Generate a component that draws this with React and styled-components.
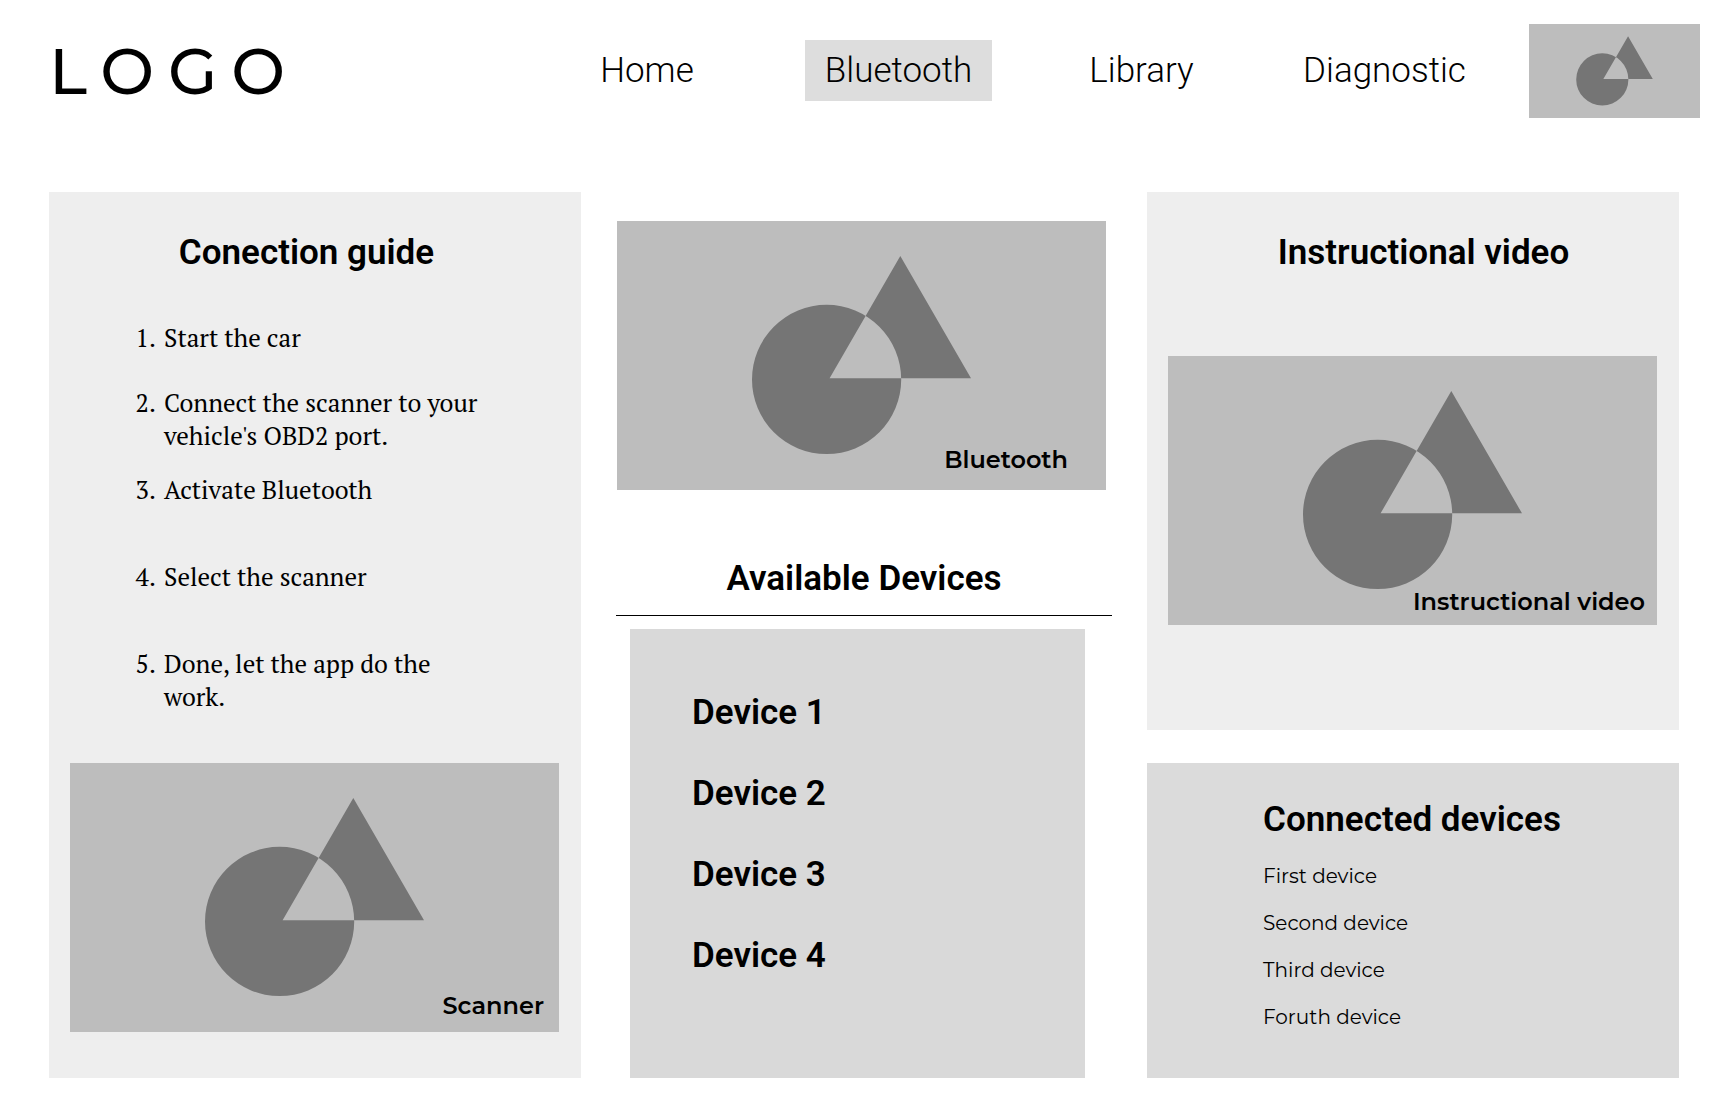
import React from "react";
import styled, { createGlobalStyle } from "styled-components";

const GlobalStyle = createGlobalStyle`
  *, *::before, *::after { box-sizing: border-box; }
  body { margin: 0; background: #ffffff; color: #000000; font-family: Roboto, "Liberation Sans", sans-serif; }
  h2, p, ul, ol, figure { margin: 0; padding: 0; }
`;

const geometric = `Montserrat, Inter, "Open Sans", sans-serif`;

const Header = styled.header`
  display: flex;
  align-items: flex-start;
  padding: 24px 28px 0 49px;
`;

const Logo = styled.a`
  margin: 8px auto 0 0;
  color: inherit;
  text-decoration: none;
  font-family: Montserrat, Lato, sans-serif;
  font-size: 64px;
  font-weight: 500;
  line-height: 78px;
  letter-spacing: 14px;
`;

const Nav = styled.nav`
  display: grid;
  grid-template-columns: 204px repeat(3, 187px);
  gap: 56px;
  margin: 16px 51px 0 0;
`;

const NavLink = styled.a`
  padding: 10px 0 9px;
  background: ${({ $active }) => ($active ? "#dddddd" : "transparent")};
  color: inherit;
  text-align: center;
  text-decoration: none;
  font-size: 35px;
  font-weight: 300;
  line-height: 42px;
`;

const Thumbnail = styled.div`
  width: 171px;
`;

const Main = styled.main`
  display: grid;
  grid-template-columns: 532fr 496fr 532fr;
  gap: 35px;
  padding: 74px 49px 39px;
`;

const Column = styled.div`
  display: flex;
  flex-direction: column;
  gap: ${({ $gap }) => $gap || 0}px;
  min-width: 0;
`;

const GuidePanel = styled.section`
  flex: 1;
  padding: 40px 22px 46px 21px;
  background: #eeeeee;
`;

const VideoPanel = styled.section`
  padding: 40px 22px 105px 21px;
  background: #eeeeee;
`;

const Title = styled.h2`
  font-size: 35px;
  font-weight: 600;
  line-height: 42px;
  text-align: ${({ $align }) => $align || "center"};
`;

const GuideTitle = styled(Title)`
  padding-right: 16px;
`;

const VideoTitle = styled(Title)`
  padding-left: 22px;
  margin-bottom: 82px;
`;

const Steps = styled.ol`
  display: grid;
  grid-template-rows: 65px repeat(3, 87px) auto;
  margin: 47px 73px 50px 91px;
  font-family: "PT Serif", "Liberation Serif", serif;
  font-size: 25px;
  line-height: 33px;
`;

const Step = styled.li`
  padding-left: 3px;
`;

const Figure = styled.figure`
  position: relative;
`;

const Drawing = styled.svg`
  display: block;
  width: 100%;
  height: auto;
`;

const Caption = styled.figcaption`
  position: absolute;
  right: ${({ $right }) => $right}px;
  bottom: ${({ $bottom }) => $bottom}px;
  font-family: ${geometric};
  font-size: 24px;
  font-weight: 600;
  line-height: 29px;
`;

const BluetoothPicture = styled.div`
  padding: 29px 6px 68px 1px;
`;

const AvailableTitle = styled(Title)`
  padding-bottom: 15px;
  border-bottom: 1px solid #000000;
`;

const DeviceList = styled.ul`
  flex: 1;
  margin: 13px 27px 0 14px;
  padding: 43px 62px;
  background: #d9d9d9;
  list-style: none;
  font-size: 35px;
  font-weight: 600;
  line-height: 81px;
`;

const ConnectedPanel = styled.section`
  flex: 1;
  padding: 36px 20px 37px 116px;
  background: #dbdbdb;
`;

const ConnectedList = styled.ul`
  margin-top: 12px;
  list-style: none;
  font-family: ${geometric};
  font-size: 20px;
  line-height: 47px;
`;

const links = ["Home", "Bluetooth", "Library", "Diagnostic"];
const steps = [
  "Start the car",
  "Connect the scanner to your vehicle's OBD2 port.",
  "Activate Bluetooth",
  "Select the scanner",
  "Done, let the app do the work.",
];
const devices = ["Device 1", "Device 2", "Device 3", "Device 4"];
const connected = ["First device", "Second device", "Third device", "Foruth device"];

function Placeholder() {
  return (
    <Drawing viewBox="0 0 489 269" aria-hidden="true">
      <rect width="489" height="269" fill="#bdbdbd" />
      <path
        fill="#757575"
        fillRule="evenodd"
        d="M135 158.5a74.6 74.6 0 1 0 149.2 0a74.6 74.6 0 1 0 -149.2 0ZM283.3 35L354 157.3H212.6Z"
      />
    </Drawing>
  );
}

function Picture({ caption, right, bottom }) {
  return (
    <Figure>
      <Placeholder />
      <Caption $right={right} $bottom={bottom}>{caption}</Caption>
    </Figure>
  );
}

export default function App() {
  return (
    <>
      <GlobalStyle />
      <Header>
        <Logo href="#">LOGO</Logo>
        <Nav>
          {links.map((label) => (
            <NavLink
              key={label}
              href={`#${label.toLowerCase()}`}
              $active={label === "Bluetooth"}
              aria-current={label === "Bluetooth" ? "page" : undefined}
            >
              {label}
            </NavLink>
          ))}
        </Nav>
        <Thumbnail>
          <Placeholder />
        </Thumbnail>
      </Header>
      <Main>
        <Column>
          <GuidePanel>
            <GuideTitle>Conection guide</GuideTitle>
            <Steps>
              {steps.map((step) => <Step key={step}>{step}</Step>)}
            </Steps>
            <Picture caption="Scanner" right={15} bottom={12} />
          </GuidePanel>
        </Column>
        <Column>
          <BluetoothPicture>
            <Picture caption="Bluetooth" right={38} bottom={16} />
          </BluetoothPicture>
          <AvailableTitle>Available Devices</AvailableTitle>
          <DeviceList>
            {devices.map((device) => <li key={device}>{device}</li>)}
          </DeviceList>
        </Column>
        <Column $gap={33}>
          <VideoPanel>
            <VideoTitle>Instructional video</VideoTitle>
            <Picture caption="Instructional video" right={12} bottom={9} />
          </VideoPanel>
          <ConnectedPanel>
            <Title $align="left">Connected devices</Title>
            <ConnectedList>
              {connected.map((device) => <li key={device}>{device}</li>)}
            </ConnectedList>
          </ConnectedPanel>
        </Column>
      </Main>
    </>
  );
}
